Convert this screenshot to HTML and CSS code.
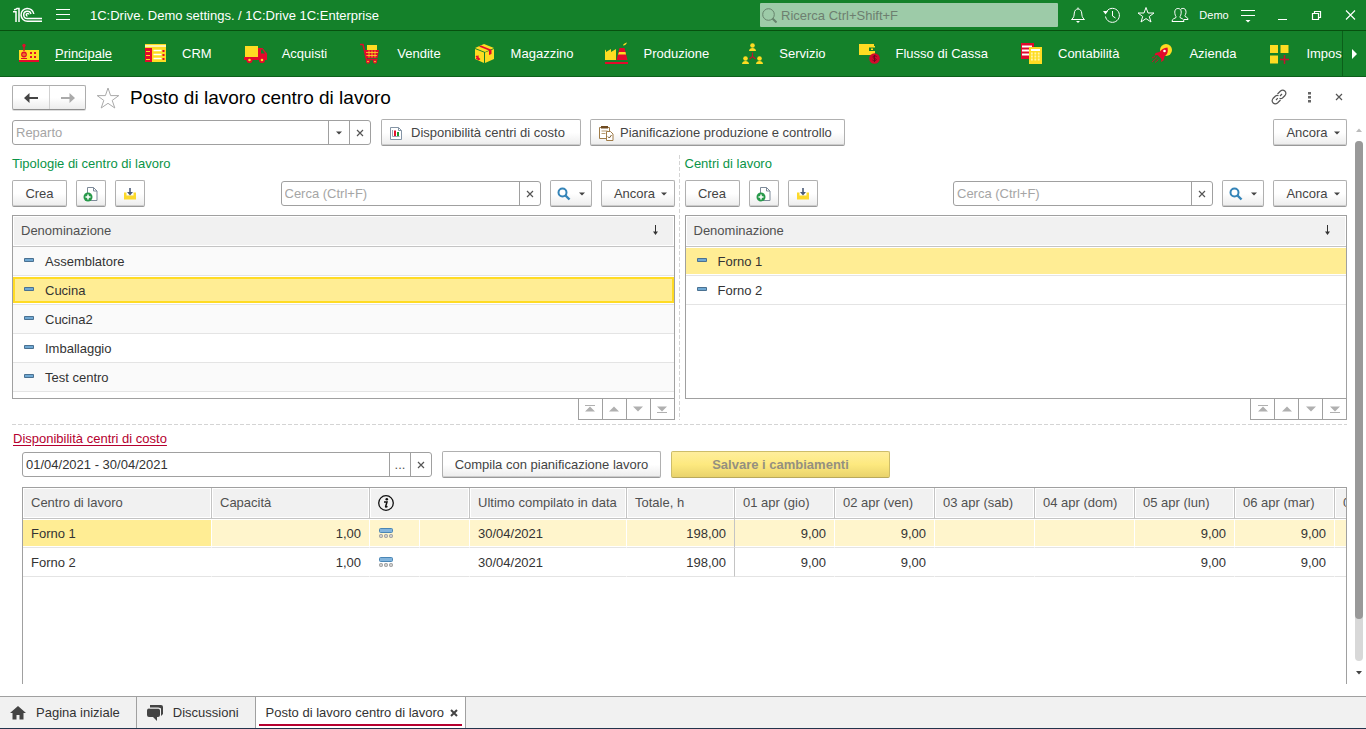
FILE: index.html
```html
<!DOCTYPE html>
<html lang="it">
<head>
<meta charset="utf-8">
<title>Posto di lavoro centro di lavoro</title>
<link rel="stylesheet" href="styles.css">
</head>
<body>
<svg class="sprite" aria-hidden="true">
  <symbol id="caret" viewBox="0 0 6 4"><path d="M0 0.5h6L3 3.5z"/></symbol>
  <symbol id="cross" viewBox="0 0 8 8"><path d="M1 1l6 6M7 1L1 7" fill="none" stroke="currentColor" stroke-width="1.2"/></symbol>
  <symbol id="copy" viewBox="0 0 16 16"><path d="M4.500 1.500h6l3.500 3.500v9.500h-9.500z" fill="#fff" stroke="#7d8a99"/><path d="M10.500 1.500v3.500h3.500" fill="none" stroke="#7d8a99"/><circle cx="5" cy="11" r="4.500" fill="#27994a"/><path d="M5 8.500v5M2.500 11h5" stroke="#fff" stroke-width="1.500"/></symbol>
  <symbol id="inbox" viewBox="0 0 14 14"><path d="M1 5.500h2.500v3h7v-3H13v7H1z" fill="#fcd92b"/><path d="M7 1v5" stroke="#4a5a78" stroke-width="1.600"/><path d="M4 5h6L7 8.400z" fill="#4a5a78"/></symbol>
  <symbol id="lens" viewBox="0 0 14 14"><circle cx="5.500" cy="5.500" r="4" fill="none" stroke="#3484b8" stroke-width="2"/><path d="M8.500 8.500l4 4" stroke="#3484b8" stroke-width="2.400"/></symbol>
  <symbol id="item" viewBox="0 0 10 4"><path d="M.5 .5h9v3h-9z" fill="#6fa8d3" stroke="#4a7191"/></symbol>
  <symbol id="sort" viewBox="0 0 7 11"><path d="M3.500 0v9" stroke="#333" stroke-width="1"/><path d="M1 6.500h5L3.500 10z" fill="#333"/></symbol>
  <symbol id="chart" viewBox="0 0 14 15"><path d="M1.500 1.500h8l3 3v9h-11z" fill="#fff" stroke="#8494a5"/><path d="M9.500 1.500v3h3" fill="none" stroke="#8494a5"/><path d="M3.500 4v6.500h7" fill="none" stroke="#9aa6b3"/><path d="M5 4.500h2V10H5z" fill="#e2122d"/><path d="M8 6h2v4H8z" fill="#1e9a2f"/></symbol>
  <symbol id="go-top" viewBox="0 0 10 8"><path d="M0 0h10v1H0zM0 6.500h10L5 1.500z"/></symbol>
  <symbol id="go-up" viewBox="0 0 10 8"><path d="M0 6.500h10L5 1.500z"/></symbol>
  <symbol id="go-down" viewBox="0 0 10 8"><path d="M0 1.500h10L5 6.500z"/></symbol>
  <symbol id="go-end" viewBox="0 0 10 8"><path d="M0 7h10v1H0zM0 1.500h10L5 6.500z"/></symbol>
  <symbol id="avail" viewBox="0 0 14 11"><rect x=".5" y=".5" width="13" height="4" rx="1" fill="#82b4dc" stroke="#4a86b5"/><g fill="#ccc" stroke="#999"><rect x=".5" y="6.500" width="3" height="3" rx="1"/><rect x="5.500" y="6.500" width="3" height="3" rx="1"/><rect x="10.500" y="6.500" width="3" height="3" rx="1"/></g></symbol>
</svg>

<header class="titlebar">
  <svg class="logo" viewBox="0 0 30 16" role="img" aria-label="1C"><g fill="none" stroke="#fff" stroke-width="1.500"><path d="M0 4.800h3V15M1 2.800C3 2.500 4 1.500 4 1.500h2V15"/><path d="M20.800 7A6.400 6.400 0 1 0 14.500 14.200H29"/><path d="M18 7a3.700 3.700 0 1 0-3.500 4.600H29"/><path d="M15.800 7.500a1.300 1.300 0 1 0-1.300 1.500"/></g></svg>
  <button class="tbtn" aria-label="Menu"><svg width="14" height="12" viewBox="0 0 14 12"><path d="M0 .5h14M0 5.500h14M0 10.500h14" stroke="#fff"/></svg></button>
  <span class="apptitle">1C:Drive. Demo settings. / 1C:Drive 1C:Enterprise</span>
  <label class="gsearch"><svg width="15" height="15" viewBox="0 0 15 15"><circle cx="6.500" cy="6.500" r="5.800" fill="none" stroke="#66836c"/><path d="M10.500 10.500l4 4" stroke="#66836c" stroke-width="2"/></svg><input type="search" aria-label="Ricerca" placeholder="Ricerca Ctrl+Shift+F"></label>
  <button class="tcell" aria-label="Notifiche"><svg viewBox="0 0 18 18"><path d="M9 1.500v1.500M2.500 13.500C5 11.500 5 10 5.300 7c.3-2.500 1.700-4 3.700-4s3.400 1.500 3.700 4c.3 3 .3 4.500 2.800 6.500z" class="ln"/><path d="M7 15h4l-2 2z" fill="#fff"/></svg></button>
  <button class="tcell" aria-label="Cronologia"><svg viewBox="0 0 18 18"><path d="M3 6.500a7 7 0 1 1-.5 4M9.500 5v5l3 2" class="ln"/><path d="M0 5h5L2.500 8.500z" fill="#fff"/></svg></button>
  <button class="tcell" aria-label="Preferiti"><svg viewBox="0 0 18 18"><path d="M9 1.500l2 5.500h6l-4.700 3.500 1.700 5.500-5-3.400L4 16l1.700-5.500L1 7h6z" class="ln"/></svg></button>
  <button class="tcell" aria-label="Utenti"><svg viewBox="0 0 18 18"><path d="M1 15.500c0-3 3-3 4-4 .4-.8-.3-1.200-.8-2.500C3 4.500 4.500 2.500 7 2.500S11 4.500 9.800 9C9.400 10.300 8.600 10.700 9 11.500c1 1 4 1 4 4zM10 3c3-1.800 6 .5 4.700 5-.4 1-1 1.600-.7 2.300 1 1 3 1 3 3.200h-4" class="ln"/></svg></button>
  <button class="tcell demo">Demo</button>
  <button class="tcell" aria-label="Impostazioni"><svg viewBox="0 0 18 18"><path d="M2 4.500h14M2 9.500h14" stroke="#fff"/><path d="M6.500 14h5L9 16.500z" fill="#fff"/></svg></button>
  <button class="tcell" aria-label="Riduci"><svg viewBox="0 0 18 18"><path d="M5 13.500h9" stroke="#fff"/></svg></button>
  <button class="tcell" aria-label="Ripristina"><svg viewBox="0 0 18 18"><path d="M5.500 7.500h6v6h-6zM7.500 7.500v-2h6v6h-2" fill="none" stroke="#fff" stroke-width="1.200"/></svg></button>
  <button class="tcell" aria-label="Chiudi"><svg viewBox="0 0 18 18"><path d="M5 4.500l9 9M14 4.500l-9 9" stroke="#fff" stroke-width="1.100"/></svg></button>
</header>

<nav class="sections">
  <div class="seclist">
  <a href="#" class="current"><svg viewBox="0 0 24 24"><path d="M2 9h20v10H2z" fill="#fedc22"/><path d="M2 19h20v2H2z" fill="#e20a2c"/><path d="M7 4v6" stroke="#e20a2c" stroke-width="1.300"/><circle cx="7" cy="4.500" r="1.700" fill="#e20a2c"/><circle cx="7" cy="13.500" r="2.200" fill="none" stroke="#e20a2c" stroke-width="1.400"/><path d="M7 11v5M4 17.500h6" stroke="#e20a2c"/><path d="M13 11h2v2h-2zM17 11h2v2h-2zM13 15h2v2h-2zM17 15h2v2h-2z" fill="#e20a2c"/></svg><span>Principale</span></a>
  <a href="#"><svg viewBox="0 0 24 24"><path d="M1 3h21v18H1z" fill="#fedc22"/><path d="M1 4h21v2H1z" fill="#fff3b0"/><path d="M1 7h7v14H1z" fill="#e20a2c"/><path d="M2 10.500h4M2 14.500h4M2 18.500h4" stroke="#fedc22"/><path d="M9.500 9.500h8M9.500 13.500h8M9.500 17.500h8" stroke="#fff" stroke-width="1.500"/><path d="M18.500 9h2v2h-2zM18.500 13h2v2h-2zM18.500 17h2v2h-2z" fill="#e20a2c"/></svg><span>CRM</span></a>
  <a href="#"><svg viewBox="0 0 24 24"><path d="M1 5h13v11H1z" fill="#fedc22"/><path d="M14 7h4.500l4.500 5.500v6.500H0v-3h14z" fill="#e20a2c"/><path d="M17 8.500h1.500l2.500 4h-4z" fill="#14812a"/><g fill="#fedc22" stroke="#e20a2c" stroke-width="1.800"><circle cx="5.500" cy="19" r="2.200"/><circle cx="18" cy="19" r="2.200"/></g></svg><span>Acquisti</span></a>
  <a href="#"><svg viewBox="0 0 24 24"><path d="M8 4h10v6H8z" fill="#fedc22"/><path d="M5 9h15l-1.500 8H7z" fill="#e20a2c"/><path d="M7 11.500h12M7 14.500h11M10 9.500v7M13 9.500v7M16 9.500v7" stroke="#fedc22" stroke-width=".8"/><path d="M1 3.500h3l3.500 15h11" fill="none" stroke="#e20a2c" stroke-width="1.500"/><g fill="#fedc22" stroke="#e20a2c" stroke-width="1.300"><circle cx="9" cy="20.500" r="1.500"/><circle cx="16" cy="20.500" r="1.500"/></g></svg><span>Vendite</span></a>
  <a href="#"><svg viewBox="0 0 24 24"><path d="M2 7l9-4 10 4-9 4z" fill="#fedc22"/><path d="M2 8l9 3.500V22l-9-4z" fill="#fedc22"/><path d="M12 11.500L21 8v10l-9 4z" fill="#fedc22"/><path d="M6 5.500l2-1 10.500 4.200V13l-2.500 1V9.500z" fill="#e20a2c"/><path d="M3 15l4 3.500M3 17l3 2M5 14.500v3" stroke="#e20a2c" stroke-width="1.200"/></svg><span>Magazzino</span></a>
  <a href="#"><svg viewBox="0 0 24 24"><path d="M0 19V8.500l1 1V11l5-3v3l5-3v11z" fill="#fedc22"/><path d="M14.500 7h5l3 12h-11z" fill="#e20a2c"/><path d="M14 11h6.500l.5 2.500h-8z" fill="#fedc22"/><path d="M18 4.500c0-1.500 2-2.500 4-3-.5 1.500-1.500 3-4 3z" fill="#fedc22"/><path d="M0 21h23v2H0z" fill="#e20a2c"/></svg><span>Produzione</span></a>
  <a href="#"><svg viewBox="0 0 24 24"><g fill="#fedc22"><circle cx="11.500" cy="4.500" r="2.300"/><path d="M8 10c0-4 7-4 7 0z"/><circle cx="4.500" cy="17.500" r="2.300"/><path d="M1 23c0-4 7-4 7 0z"/><circle cx="18.500" cy="17.500" r="2.300"/><path d="M15 23c0-4 7-4 7 0z"/></g><path d="M11.500 11.500v4l-3 2.500M11.500 15.500l3 2.500" fill="none" stroke="#c41230" stroke-width="1.200"/></svg><span>Servizio</span></a>
  <a href="#"><svg viewBox="0 0 24 24"><path d="M1 3h15v2h1v9H1z" fill="#fedc22"/><path d="M11 6.500h6v3.500h-6z" fill="#14812a"/><path d="M13 7.500h2v1.500h-2z" fill="#fedc22"/><circle cx="16.500" cy="17.500" r="5.300" fill="#d30a2c"/><path d="M18.500 15.500c-1-1-4-1-3.500 1 .3 1 3 .8 3.200 2 .2 1.600-2.700 1.500-3.700.6M16.500 14v7" fill="none" stroke="#6b0d1c"/></svg><span>Flusso di Cassa</span></a>
  <a href="#"><svg viewBox="0 0 24 24"><path d="M1 2h13v16H1z" fill="#e20a2c"/><path d="M2 5.500h10M2 9.500h8M2 13.500h8" stroke="#fff" stroke-width="1.800"/><path d="M9 6h13v17H9z" fill="#fedc22"/><path d="M11 8h9v2h-9z" fill="#fff"/><path d="M11 12.500h9M11 15.500h9M11 18.500h9" stroke="#fff3a8" stroke-width="1.800" stroke-dasharray="1.800 1.600"/></svg><span>Contabilità</span></a>
  <a href="#"><svg viewBox="0 0 24 24"><circle cx="15" cy="9" r="6" fill="#fedc22"/><path d="M16.500 6.500c-4 .3-6 2-8 4.500L4.500 12l-1 2.500 3-.5 4 4-.5 3 2.500-1.500 1-4c2.500-2 4-4 3-9z" fill="#e20a2c"/><circle cx="13.500" cy="10" r="1.300" fill="#fff"/><path d="M1 17l3-1.500M1 21l5-4.500M4 21.500l3.500-3" stroke="#c41230"/></svg><span>Azienda</span></a>
  <a href="#"><svg viewBox="0 0 24 24"><path d="M2 4h8v8H2zM12.500 4h8v8h-8zM2 14.500h8v8H2z" fill="#fedc22"/><path d="M16.500 14v9M12 18.500h9" stroke="#c41230" stroke-width="1.500"/></svg><span>Impostazioni</span></a>
  </div>
  <button class="secmore" aria-label="Altre sezioni"><svg width="5" height="10" viewBox="0 0 5 10"><path d="M0 0l5 5-5 5z" fill="#fff"/></svg></button>
</nav>

<main class="form">
  <div class="formhead">
    <div class="history">
      <button aria-label="Indietro"><svg width="14" height="10" viewBox="0 0 14 10"><path d="M0 5l5.500-5v4h8.500v2H5.500v4z" fill="#444"/></svg></button>
      <button aria-label="Avanti"><svg width="14" height="10" viewBox="0 0 14 10"><path d="M14 5L8.500 0v4H0v2h8.500v4z" fill="#aaa"/></svg></button>
    </div>
    <button class="plain star" aria-label="Aggiungi ai preferiti"><svg width="24" height="22" viewBox="0 0 24 22"><path d="M12 1l2.600 7.600h8.200l-6.600 4.800 2.600 7.600-6.800-4.700L5.200 21l2.600-7.600L1.200 8.600h8.200z" fill="none" stroke="#aaa"/></svg></button>
    <h1>Posto di lavoro centro di lavoro</h1>
    <button class="plain tool" aria-label="Collegamento"><svg width="16" height="16" viewBox="0 0 16 16"><path d="M6.500 5l3-3c3-2.500 7 1 4.500 4.500l-2.500 2.500c-1 .8-2 .8-3 .3M9.500 11l-3 3c-3 2.500-7-1-4.500-4.500L4.500 7c1-.8 2-.8 3-.3M5 11l1.800-1.800M9 7l2-2" fill="none" stroke="#555" stroke-width="1.200"/></svg></button>
    <button class="plain tool" aria-label="Altre azioni"><svg width="3" height="11" viewBox="0 0 3 11"><path d="M0 0h3v2.500H0zM0 4h3v2.500H0zM0 8h3v2.500H0z" fill="#666"/></svg></button>
    <button class="plain tool" aria-label="Chiudi"><svg width="8" height="8"><use href="#cross"/></svg></button>
  </div>

  <div class="formbody">
    <div class="content">
      <div class="bar">
        <div class="field dept"><input type="text" aria-label="Reparto" placeholder="Reparto"><button aria-label="Scegli"><svg width="6" height="4"><use href="#caret"/></svg></button><button aria-label="Cancella"><svg width="8" height="8"><use href="#cross"/></svg></button></div>
        <button class="btn wide-a"><svg width="14" height="15"><use href="#chart"/></svg>Disponibilità centri di costo</button>
        <button class="btn wide-b"><svg width="16" height="16" viewBox="0 0 16 16"><path d="M1.500 2.500h10v11h-10z" fill="#fff" stroke="#a07c48"/><path d="M3 1h7v2.500H3z" fill="#6e4a20"/><path d="M3.500 6h6M3.500 8.500h4" stroke="#b79a70"/><path d="M8.500 6.500h4l2.500 2.500v6.500H8.500z" fill="#fff" stroke="#a07c48"/><path d="M9.800 11.500l1.500 1.500 2.200-3" fill="none" stroke="#7a5a2c"/></svg>Pianificazione produzione e controllo</button>
        <button class="btn more push">Ancora<svg width="6" height="4"><use href="#caret"/></svg></button>
      </div>

      <div class="panes">
        <section class="pane">
          <h2>Tipologie di centro di lavoro</h2>
          <div class="bar">
            <button class="btn create">Crea</button>
            <button class="btn icon" aria-label="Copia"><svg width="16" height="16"><use href="#copy"/></svg></button>
            <button class="btn icon" aria-label="Carica"><svg width="14" height="14"><use href="#inbox"/></svg></button>
            <div class="field find push"><input type="text" aria-label="Cerca tipologie" placeholder="Cerca (Ctrl+F)"><button aria-label="Cancella"><svg width="8" height="8"><use href="#cross"/></svg></button></div>
            <button class="btn lens" aria-label="Cerca"><svg width="14" height="14"><use href="#lens"/></svg><svg width="6" height="4"><use href="#caret"/></svg></button>
            <button class="btn more">Ancora<svg width="6" height="4"><use href="#caret"/></svg></button>
          </div>
          <div class="listbox">
            <table class="list striped">
              <thead><tr><th>Denominazione<svg width="7" height="11"><use href="#sort"/></svg></th></tr></thead>
              <tbody>
                <tr><td><svg width="10" height="4"><use href="#item"/></svg>Assemblatore</td></tr>
                <tr class="active"><td><svg width="10" height="4"><use href="#item"/></svg>Cucina</td></tr>
                <tr><td><svg width="10" height="4"><use href="#item"/></svg>Cucina2</td></tr>
                <tr><td><svg width="10" height="4"><use href="#item"/></svg>Imballaggio</td></tr>
                <tr><td><svg width="10" height="4"><use href="#item"/></svg>Test centro</td></tr>
              </tbody>
            </table>
          </div>
          <div class="pager">
            <button aria-label="Inizio"><svg width="10" height="8"><use href="#go-top"/></svg></button><button aria-label="Su"><svg width="10" height="8"><use href="#go-up"/></svg></button><button aria-label="Giù"><svg width="10" height="8"><use href="#go-down"/></svg></button><button aria-label="Fine"><svg width="10" height="8"><use href="#go-end"/></svg></button>
          </div>
        </section>
        <div class="vsplit"></div>
        <section class="pane">
          <h2>Centri di lavoro</h2>
          <div class="bar">
            <button class="btn create">Crea</button>
            <button class="btn icon" aria-label="Copia"><svg width="16" height="16"><use href="#copy"/></svg></button>
            <button class="btn icon" aria-label="Carica"><svg width="14" height="14"><use href="#inbox"/></svg></button>
            <div class="field find push"><input type="text" aria-label="Cerca centri" placeholder="Cerca (Ctrl+F)"><button aria-label="Cancella"><svg width="8" height="8"><use href="#cross"/></svg></button></div>
            <button class="btn lens" aria-label="Cerca"><svg width="14" height="14"><use href="#lens"/></svg><svg width="6" height="4"><use href="#caret"/></svg></button>
            <button class="btn more">Ancora<svg width="6" height="4"><use href="#caret"/></svg></button>
          </div>
          <div class="listbox">
            <table class="list">
              <thead><tr><th>Denominazione<svg width="7" height="11"><use href="#sort"/></svg></th></tr></thead>
              <tbody>
                <tr class="chosen"><td><svg width="10" height="4"><use href="#item"/></svg>Forno 1</td></tr>
                <tr><td><svg width="10" height="4"><use href="#item"/></svg>Forno 2</td></tr>
              </tbody>
            </table>
          </div>
          <div class="pager">
            <button aria-label="Inizio"><svg width="10" height="8"><use href="#go-top"/></svg></button><button aria-label="Su"><svg width="10" height="8"><use href="#go-up"/></svg></button><button aria-label="Giù"><svg width="10" height="8"><use href="#go-down"/></svg></button><button aria-label="Fine"><svg width="10" height="8"><use href="#go-end"/></svg></button>
          </div>
        </section>
      </div>

      <div class="hsplit"></div>

      <section class="avail">
        <a href="#" class="availlink">Disponibilità centri di costo</a>
        <div class="bar">
          <div class="field period"><input type="text" aria-label="Periodo" value="01/04/2021 - 30/04/2021"><button aria-label="Scegli periodo">...</button><button aria-label="Cancella"><svg width="8" height="8"><use href="#cross"/></svg></button></div>
          <button class="btn fill">Compila con pianificazione lavoro</button>
          <button class="btn fill save" disabled>Salvare i cambiamenti</button>
        </div>
        <div class="gridbox">
          <table class="grid">
            <colgroup><col class="c-name"><col class="c-cap"><col class="c-ico"><col class="c-ico"><col class="c-date"><col class="c-tot"><col class="c-day"><col class="c-day"><col class="c-day"><col class="c-day"><col class="c-day"><col class="c-day"><col class="c-day"></colgroup>
            <thead><tr><th>Centro di lavoro</th><th>Capacità</th><th colspan="2" class="info"><svg width="18" height="18" viewBox="0 0 18 18" role="img" aria-label="Informazioni"><circle cx="9" cy="9" r="7.300" fill="none" stroke="#111" stroke-width="1.300"/><circle cx="9.800" cy="5.200" r="1.300" fill="#111"/><path d="M7 8h3L8.600 12.600q0 .8 1.900-.2" fill="none" stroke="#111" stroke-width="1.500"/></svg></th><th>Ultimo compilato in data</th><th>Totale, h</th><th>01 apr (gio)</th><th>02 apr (ven)</th><th>03 apr (sab)</th><th>04 apr (dom)</th><th>05 apr (lun)</th><th>06 apr (mar)</th><th>07 apr (mer)</th></tr></thead>
            <tbody>
              <tr class="chosen"><td>Forno 1</td><td class="num">1,00</td><td><svg width="14" height="11"><use href="#avail"/></svg></td><td></td><td>30/04/2021</td><td class="num">198,00</td><td class="num">9,00</td><td class="num">9,00</td><td></td><td></td><td class="num">9,00</td><td class="num">9,00</td><td></td></tr>
              <tr><td>Forno 2</td><td class="num">1,00</td><td><svg width="14" height="11"><use href="#avail"/></svg></td><td></td><td>30/04/2021</td><td class="num">198,00</td><td class="num">9,00</td><td class="num">9,00</td><td></td><td></td><td class="num">9,00</td><td class="num">9,00</td><td></td></tr>
            </tbody>
          </table>
        </div>
      </section>
    </div>
    <div class="scroll" aria-hidden="true">
      <svg width="6" height="4" viewBox="0 0 6 4"><path d="M0 4h6L3 .5z" fill="#bbb"/></svg>
      <div class="track"><div class="thumb"></div></div>
      <svg width="6" height="4" viewBox="0 0 6 4"><path d="M0 0h6L3 3.500z" fill="#444"/></svg>
    </div>
  </div>
</main>

<footer class="tabs">
  <a href="#"><svg width="16" height="14" viewBox="0 0 16 14"><path d="M8 0l8 7h-2.500v6.500h-4V9h-3v4.500h-4V7H0z" fill="#444"/></svg><span>Pagina iniziale</span></a>
  <a href="#"><svg width="16" height="16" viewBox="0 0 16 16"><path d="M3 0h11q2 0 2 2v7l-2 2V4q0-1-1-1H3z" fill="#444"/><path d="M2 3.500h9q2 0 2 2V10q0 2-2 2h-1v4l-4-4H2q-2 0-2-2V5.500q0-2 2-2z" fill="#444"/><path d="M2.500 3h9q2 0 2 2v7" fill="none" stroke="#f1f1f1" stroke-width="1"/></svg><span>Discussioni</span></a>
  <a href="#" class="open"><span>Posto di lavoro centro di lavoro</span><svg width="8" height="8" viewBox="0 0 8 8"><path d="M1 1l6 6M7 1L1 7" stroke="#444" stroke-width="2"/></svg></a>
</footer>
</body>
</html>
```
FILE: styles.css
```css
* { box-sizing: border-box; }
body {
  margin: 0;
  height: 100vh;
  display: flex;
  flex-direction: column;
  overflow: hidden;
  background: #fff;
  color: #333;
  font: 13px/16px "Liberation Sans", Arial, sans-serif;
}
button, input { font: inherit; color: inherit; }
button { padding: 0; border: 0; background: none; }
svg { flex: none; }
.sprite { display: none; }

/* Window title bar */
.titlebar {
  display: flex;
  align-items: center;
  height: 31px;
  padding-left: 13px;
  background: #14812a;
  border-bottom: 1px solid #07500f;
  color: #fff;
}
.logo { width: 30px; height: 16px; }
.tbtn { display: flex; margin-left: 13px; }
.apptitle { margin-left: 20px; padding-top: 1px; }
.gsearch {
  display: flex;
  align-items: center;
  gap: 4px;
  width: 298px;
  height: 24px;
  margin-left: auto;
  margin-right: 2px;
  padding-left: 2px;
  background: #9dcba8;
  border-radius: 1px;
}
.gsearch input { flex: 1; min-width: 0; padding: 1px 0 0; border: 0; background: none; outline: 0; }
.gsearch input::placeholder { color: #6d7f70; }
.tcell { display: flex; align-items: center; justify-content: center; width: 34px; height: 30px; padding-left: 2px; }
.tcell svg { width: 18px; height: 18px; }
.ln { fill: none; stroke: #fff; stroke-width: 1; }
.demo { font-size: 11px; }

/* Section panel */
.sections {
  display: flex;
  height: 46px;
  background: #14812a;
  border-bottom: 1px solid #0b5f1a;
}
.seclist { flex: 1; min-width: 0; display: flex; gap: 32px; padding-left: 17px; overflow: hidden; }
.seclist a { flex: none; display: flex; align-items: center; gap: 14px; color: #fff; text-decoration: none; }
.seclist svg { width: 24px; height: 24px; margin-bottom: 1px; }
.seclist .current span { text-decoration: underline; text-underline-offset: 2px; }
.secmore { display: flex; align-items: center; justify-content: center; width: 24px; border-left: 1px solid #0b5f1a; }

/* Form */
.form { flex: 1; min-height: 0; display: flex; flex-direction: column; padding: 8px 0 0 12px; }
.formhead { display: flex; align-items: center; height: 25px; margin-bottom: 9px; padding-right: 12px; }
.history { display: flex; height: 25px; border: 1px solid #adadad; border-bottom-color: #8e8e8e; border-radius: 2px; background: linear-gradient(#fff 50%, #ececec); box-shadow: 0 1px 0 #ddd; }
.history button { width: 36px; display: flex; align-items: center; justify-content: center; }
.history button + button { border-left: 1px solid #d0d0d0; }
.plain { display: flex; align-items: center; justify-content: center; }
.star { margin-left: 10px; }
h1 { flex: 1; margin: 0 0 0 10px; font-size: 19px; line-height: 24px; font-weight: 400; color: #000; }
.tool { width: 30px; height: 24px; padding-bottom: 1px; color: #555; }
.formbody { flex: 1; min-height: 0; display: flex; }
.content { flex: 1; min-width: 0; display: flex; flex-direction: column; padding-bottom: 12px; }

.bar { display: flex; align-items: center; gap: 9px; height: 27px; }
.push { margin-left: auto; }
.btn {
  display: flex;
  align-items: center;
  justify-content: center;
  height: 27px;
  padding-top: 1px;
  border: 1px solid #b0b0b0;
  border-bottom-color: #999;
  border-radius: 2px;
  background: linear-gradient(#fff 50%, #ececec);
  box-shadow: inset 0 -1px #ccc;
  color: #444;
  white-space: nowrap;
}
.btn svg { fill: #444; }
.wide-a, .wide-b { justify-content: flex-start; padding-left: 7px; }
.wide-a { width: 200px; gap: 8px; margin-left: 1px; }
.wide-b { width: 255px; gap: 6px; }
.more { width: 74px; gap: 6px; padding-left: 6px; }
.create { width: 55px; }
.icon { width: 30px; }
.lens { width: 42px; gap: 8px; }
.fill { width: 219px; }
.save {
  border-color: #cdbd6a;
  border-bottom-color: #b9a95c;
  background: linear-gradient(#ffee9c, #fde97f 50%, #e9d36c);
  box-shadow: none;
  color: #949080;
  font-weight: 700;
}
.field {
  display: flex;
  height: 25px;
  border: 1px solid #a0a0a0;
  border-radius: 3px;
  background: #fff;
  overflow: hidden;
}
.field input { flex: 1; min-width: 0; padding: 0 3px; border: 0; outline: 0; background: none; }
.field input::placeholder { color: #a5a5a5; }
.field button { display: flex; align-items: center; justify-content: center; width: 21px; border-left: 1px solid #a0a0a0; color: #555; fill: #444; }
.dept { width: 359px; }
.find { width: 260px; }
.period { width: 410px; }
.fill { margin-left: 1px; }

/* Two list panes */
.panes { display: grid; grid-template-columns: 1fr 10px 1fr; margin-top: 9px; }
.pane { display: flex; flex-direction: column; min-width: 0; }
h2 { margin: 0 0 8px; padding-top: 1px; font-size: 13px; line-height: 16px; font-weight: 400; color: #0a9447; }
.vsplit { width: 1px; margin-left: 4px; background: repeating-linear-gradient(#d4d4d4 0 4px, transparent 4px 6px); }
.hsplit { height: 1px; margin-top: 4px; background: repeating-linear-gradient(90deg, #d4d4d4 0 4px, transparent 4px 6px); }
.listbox { flex: 1; min-height: 184px; margin-top: 8px; border: 1px solid #a0a0a0; }
.list { width: 100%; border-collapse: separate; border-spacing: 0; }
th {
  height: 31px;
  padding: 0 8px;
  text-align: left;
  font-weight: 400;
  color: #505050;
  background: #f1f1f1;
  border-bottom: 1px solid #c4c4c4;
  box-shadow: inset 0 0 0 1px #fff;
  white-space: nowrap;
}
.list th svg { float: right; margin: 2px 7px 0 0; }
td { height: 29px; padding: 2px 8px 0; border-bottom: 1px solid #e4e4e4; white-space: nowrap; }
.list td { padding-left: 11px; }
.list td svg { margin-right: 11px; vertical-align: 4px; }
.striped tbody tr:nth-child(odd) td { background: #fafafa; }
.chosen td { background: #ffed94; box-shadow: inset 0 1px #fff, inset 0 -1px #fff; }
.list .active td {
  background: #ffed94;
  box-shadow: inset 0 1px #fff, inset 0 -1px #fff, inset 0 3px #ffdb24, inset 0 -3px #ffdb24, inset 2px 0 #ffdb24, inset -2px 0 #ffdb24;
}
.pager { display: flex; align-self: flex-end; height: 22px; margin-top: -1px; border: 1px solid #a0a0a0; border-left: 0; }
.pager button { display: flex; align-items: center; justify-content: center; width: 24px; border-left: 1px solid #a0a0a0; }
.pager svg { fill: #b0b0b0; }

/* Availability grid */
.avail { flex: 1; min-height: 0; display: flex; flex-direction: column; padding-left: 10px; margin-top: 6px; }
.availlink { align-self: flex-start; margin: 0 0 4px -9px; color: #b5002f; text-underline-offset: 2px; }
.gridbox { flex: 1; min-height: 0; margin-top: 9px; border: 1px solid #a0a0a0; border-bottom: 0; overflow: hidden; }
.grid { width: 1412px; table-layout: fixed; border-collapse: separate; border-spacing: 0; }
.c-name { width: 189px; }
.c-cap { width: 158px; }
.c-ico { width: 50px; }
.c-date { width: 157px; }
.c-tot { width: 108px; }
.c-day { width: 100px; }
.grid th { border-right: 1px solid #c4c4c4; }
.grid td { border-right: 1px solid #fff; }
.grid th svg, .grid td svg { display: block; }
.grid td svg { margin: 0 0 1px 1px; }
.grid th.info { padding-left: 7px; }
.grid th:nth-child(5), .grid td:nth-child(6) { border-right: 1px solid #c4c4c4; }
.grid .chosen td { background: #fff5cc; }
.grid .chosen td:first-child { background: #ffed94; }
.num { text-align: right; }

/* Form scrollbar */
.scroll { display: flex; flex-direction: column; align-items: center; justify-content: space-between; width: 19px; padding: 9px 0 21px 4px; }
.track { flex: 1; width: 8px; margin: 9px 0 10px; border-radius: 4px; background: #d8d8d8; }
.thumb { height: 92%; border-radius: 4px; background: #999; }

/* Open windows */
.tabs { display: flex; height: 33px; background: #f1f1f1; border-top: 1px solid #a0a0a0; border-bottom: 1px solid #23344d; }
.tabs a { display: flex; align-items: center; padding: 0 16px 0 10px; border-right: 1px solid #a0a0a0; color: #333; text-decoration: none; }
.tabs a svg { margin-right: 10px; }
.tabs .open { padding: 0 7px 0 10px; background: linear-gradient(#b5002f, #b5002f) 3px 27px / calc(100% - 6px) 2px no-repeat #fff; }
.tabs .open svg { margin: 0 0 0 6px; }
```
